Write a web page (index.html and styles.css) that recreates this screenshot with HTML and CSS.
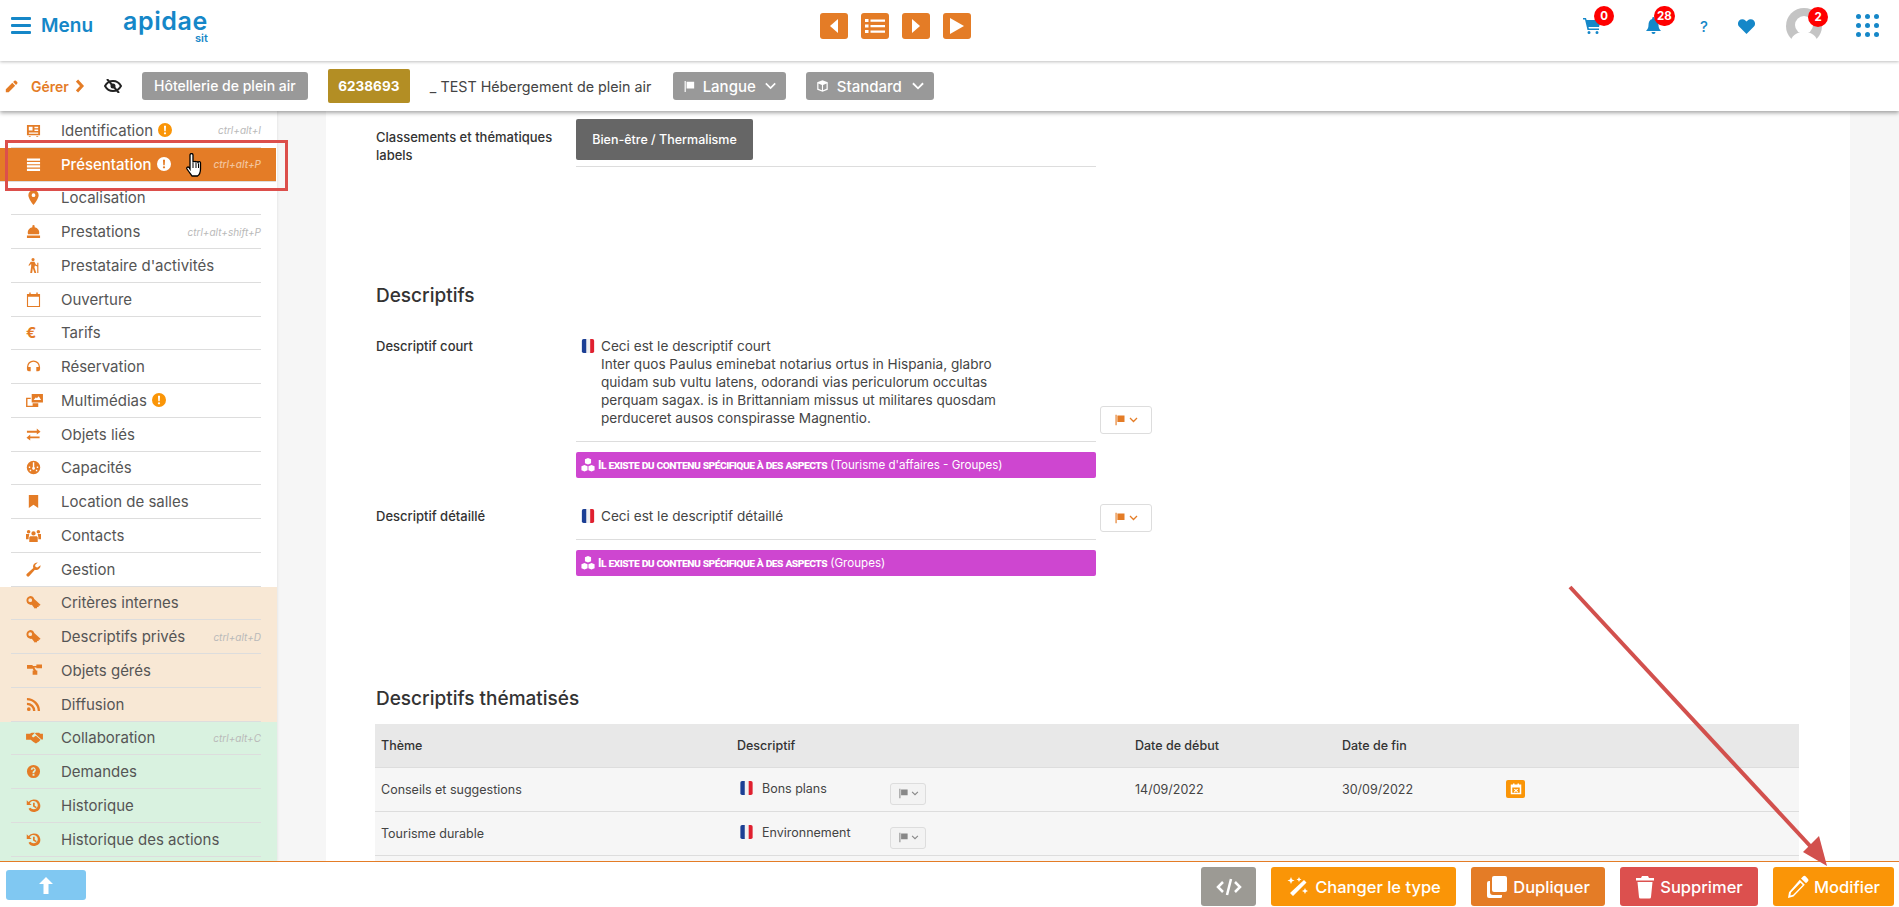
FILE: index.html
```html
<!DOCTYPE html>
<html lang="fr">
  <head>
    <meta charset="utf-8">
    <title>Apidae - Présentation</title>
    <link rel="stylesheet" href="styles.css">
  </head>
  <body>
    <svg class="icon-defs" width="0" height="0">
      <symbol id="i-card" viewBox="0 0 16 16"><path fill-rule="evenodd" d="M1 2h14v11H1zM3 4v4h4V4zm6 0v1.500h4V4zm0 3v1.500h4V7zM3 10v1.500h10V10zM3 14h2v1H3zm8 0h2v1h-2z"/></symbol>
      <symbol id="i-list" viewBox="0 0 16 16"><path d="M1 1.500h14v2.400H1zM1 5.200h14v2.400H1zM1 8.900h14v2.400H1zM1 12.600h14V15H1z"/></symbol>
      <symbol id="i-pin" viewBox="0 0 16 16"><path fill-rule="evenodd" d="M8 0a5.500 5.500 0 0 0-5.500 5.500C2.500 9.500 8 16 8 16s5.500-6.500 5.500-10.500A5.500 5.500 0 0 0 8 0zm0 7.500a2 2 0 1 1 0-4 2 2 0 0 1 0 4z"/></symbol>
      <symbol id="i-bell" viewBox="0 0 16 16"><path d="M8 1a1.200 1.200 0 0 1 1.200 1.200v1.200A5.800 5.800 0 0 1 13.800 11H2.200a5.800 5.800 0 0 1 4.600-7.600V2.200A1.200 1.200 0 0 1 8 1zM1 12.300h14V15H1z"/></symbol>
      <symbol id="i-hike" viewBox="0 0 16 16"><path d="M7.500 0a1.700 1.700 0 1 1 0 3.400 1.700 1.700 0 0 1 0-3.400zM5 4h4l1.500 3 1.500.8V5h1.200v11H12V9l-2.500-1L9 10l2 6H9L7.300 11 6.500 16H4.500l1-7V6L4 8H2.500z"/></symbol>
      <symbol id="i-cal" viewBox="0 0 16 16"><path fill-rule="evenodd" d="M1 2h2.500V.5H5V2h6V.5h1.500V2H15v14H1zm1.200 3v9.800h11.600V5z"/></symbol>
      <symbol id="i-head" viewBox="0 0 16 16"><path d="M8 1.500a7 7 0 0 1 7 7V11a2 2 0 0 1-2 2h-2V8.500h2.600a5.600 5.600 0 0 0-11.200 0H5V13H3a2 2 0 0 1-2-2V8.500a7 7 0 0 1 7-7z"/></symbol>
      <symbol id="i-media" viewBox="0 0 18 16"><path fill-rule="evenodd" d="M6 1h12v9H6zm2 6.500h8L13.500 3.500l-2 2-1-1zM0 5h5v1.500H1.500v7H7V11h6v4H0z"/></symbol>
      <symbol id="i-swap" viewBox="0 0 16 16"><path d="M1 4h10.500V1.500L15.500 5l-4 3V6H1zM14.500 10H4.500V8l-4 3.500 4 3V12h10z"/></symbol>
      <symbol id="i-gauge" viewBox="0 0 16 16"><path fill-rule="evenodd" d="M8 .8a7.200 7.200 0 1 1 0 14.400A7.200 7.200 0 0 1 8 .8zM7.300 2.500v5a1.500 1.500 0 1 0 1.500 0v-5zM3 7v1.500h1.500V7zm8.500 0v1.500H13V7zM4 10.500V12h1.500v-1.500zm6.500 0V12H12v-1.500z"/></symbol>
      <symbol id="i-mark" viewBox="0 0 16 16"><path d="M3 1h10v14l-5-3.500L3 15z"/></symbol>
      <symbol id="i-users" viewBox="0 0 16 16"><path d="M8 3.500a2.300 2.300 0 1 1 0 4.600 2.300 2.300 0 0 1 0-4.600zM2.800 2a1.900 1.900 0 1 1 0 3.800 1.900 1.900 0 0 1 0-3.800zm10.400 0a1.900 1.900 0 1 1 0 3.800 1.900 1.900 0 0 1 0-3.800zM4.500 8.800h7l1 1V15h-9V9.800zM0 6.500h3.500L2.800 10v2H0zm12.500 0H16V12h-2.800v-2z"/></symbol>
      <symbol id="i-wrench" viewBox="0 0 16 16"><path d="M15.500 3.500a4.500 4.500 0 0 1-6 4.700L3.500 15a1.700 1.700 0 0 1-2.500-2.500l6.800-6A4.500 4.500 0 0 1 12.500.5L9.700 3.300l.5 2 2 .5z"/></symbol>
      <symbol id="i-key" viewBox="0 0 16 16"><path fill-rule="evenodd" d="M4.500 1a4.500 4.500 0 0 1 4.300 3.200l6.700 6.300-1 1-1-.3v1.600h-1.600l-.2 1.500-1.200-.5-1 .9-3.300-4.200A4.500 4.500 0 1 1 4.500 1zm0 2.500a2 2 0 1 0 0 4 2 2 0 0 0 0-4z"/></symbol>
      <symbol id="i-tree" viewBox="0 0 16 16"><path d="M0 2h6v1.200h4V1.500h6v4h-6V4.700H7.800l2 3.300H11v4.500H6V8h1.300L5.500 5.500V6H0z"/></symbol>
      <symbol id="i-rss" viewBox="0 0 16 16"><path d="M1 1a14 14 0 0 1 14 14h-2.500A11.500 11.500 0 0 0 1 3.500zM1 6a9 9 0 0 1 9 9H7.500A6.500 6.500 0 0 0 1 8.500zM3 11a2 2 0 1 1 0 4 2 2 0 0 1 0-4z"/></symbol>
      <symbol id="i-hands" viewBox="0 0 18 16"><path d="M0 4h4l2-1h3.500L6 6.500 7.500 8l3-2 5 4.500-2 2-1 .5-2 1.500-3-2L5 10.500H0zM10.500 3H14l1 1h3v6h-1.500L10.800 5 9.500 3.500z"/></symbol>
      <symbol id="i-help" viewBox="0 0 16 16"><path fill-rule="evenodd" d="M8 1a7 7 0 1 1 0 14A7 7 0 0 1 8 1zM8 3.500A3 3 0 0 0 5 6h2a1 1 0 1 1 1.500.9C7.500 7.500 7 8.200 7 9.500h2c0-.8.300-1 1-1.500A3 3 0 0 0 8 3.500zM7 10.500v2h2v-2z"/></symbol>
      <symbol id="i-hist" viewBox="0 0 16 16"><path fill-rule="evenodd" d="M8.500 1.500a6.700 6.700 0 1 1-5.800 10l1.900-1a4.500 4.500 0 1 0-.6-4.800L6 7.500H.8V2.300l1.900 1.900a6.700 6.700 0 0 1 5.800-2.700zM7.500 5h1.800v3.200l2.200 1.500-1 1.300-3-2z"/></symbol>
      <symbol id="i-warn" viewBox="0 0 16 16"><path fill-rule="evenodd" d="M8 0a8 8 0 1 1 0 16A8 8 0 0 1 8 0zM6.800 3l.4 6.500h1.600L9.200 3zM8 10.500a1.300 1.300 0 1 0 0 2.600 1.300 1.300 0 0 0 0-2.600z"/></symbol>
      <symbol id="i-flag" viewBox="0 0 16 16"><path d="M2 1h1.500v14H2zM4.500 2H14v8.500H4.500z"/></symbol>
      <symbol id="i-fr" viewBox="0 0 14 16"><rect width="14" height="16" rx="2" fill="#f1f1f1"/><path d="M0 2a2 2 0 0 1 2-2h3v16H2a2 2 0 0 1-2-2z" fill="#1c3f94"/><path d="M9.500 0H12a2 2 0 0 1 2 2v12a2 2 0 0 1-2 2H9.500z" fill="#e0202f"/></symbol>
      <symbol id="i-cubes" viewBox="0 0 16 16"><path d="M8 0l3.500 1.500V6L8 7.500 4.500 6V1.500zM4 8l3.500 1.500V14L4 15.500.5 14V9.500zM12 8l3.500 1.500V14L12 15.500 8.500 14V9.500z"/></symbol>
      <symbol id="i-pencil" viewBox="0 0 16 16"><path d="M11.500 1a1.500 1.500 0 0 1 2 0l1.500 1.500a1.500 1.500 0 0 1 0 2L13.500 6 10 2.500zM9 3.500L12.500 7l-8 8H1v-3.500z"/></symbol>
    </svg>

    <header class="top-bar">
      <div class="top-left">
        <a class="menu-link">
          <span class="burger"><i></i><i></i><i></i></span>
          Menu
        </a>
        <div class="logo">
          <span class="logo-name">apidae</span>
          <span class="logo-sit">sit</span>
        </div>
      </div>
      <nav class="record-nav">
        <button class="nav-button"><svg width="10" height="14" viewBox="0 0 10 14"><path d="M9 0v14L1 7z" fill="#fff"/></svg></button>
        <button class="nav-button"><svg width="20" height="16" viewBox="0 0 20 16" fill="#fff"><path d="M0 1h3.500v3H0zM5.500 1.500H20v2.200H5.500zM0 6.500h3.500v3H0zM5.500 7H20v2.200H5.500zM0 12h3.500v3H0zM5.500 12.500H20v2.200H5.500z"/></svg></button>
        <button class="nav-button"><svg width="10" height="14" viewBox="0 0 10 14"><path d="M1 0v14l8-7z" fill="#fff"/></svg></button>
        <button class="nav-button"><svg width="16" height="18" viewBox="0 0 16 18"><path d="M1 1v16l14-8z" fill="#fff"/></svg></button>
      </nav>
      <div class="top-right">
        <span class="top-icon cart">
          <svg width="18" height="16" viewBox="0 0 18 16" fill="#1587c8"><path d="M0 0h3l.6 2H18l-2 7H5.500l.4 1.500H16V12H4.500L2 1.500H0zM6 13a1.500 1.500 0 1 1 0 3 1.500 1.500 0 0 1 0-3zm8 0a1.500 1.500 0 1 1 0 3 1.500 1.500 0 0 1 0-3z"/></svg>
          <b class="count">0</b>
        </span>
        <span class="top-icon bell">
          <svg width="15" height="18" viewBox="0 0 15 18" fill="#1587c8"><path d="M7.500 0a1.300 1.300 0 0 1 1.300 1.300v.6C11.500 2.500 12.500 5 12.500 8c0 3 1 4.500 2.500 6H0c1.500-1.500 2.500-3 2.500-6 0-3 1-5.500 3.700-6.100v-.6A1.300 1.300 0 0 1 7.500 0zM5.500 15h4a2 2 0 0 1-4 0z"/></svg>
          <b class="count">28</b>
        </span>
        <span class="top-icon help-mark">?</span>
        <span class="top-icon heart">
          <svg width="17" height="15" viewBox="0 0 17 15" fill="#1587c8"><path d="M8.500 15L1.300 7.800A4.300 4.300 0 0 1 7.400 1.500l1.100 1 1.100-1a4.300 4.300 0 0 1 6.100 6.300z"/></svg>
        </span>
        <span class="top-icon avatar">
          <svg width="36" height="36" viewBox="0 0 36 36"><circle cx="18" cy="18" r="18" fill="#c4c4c4"/><circle cx="18" cy="17" r="9" fill="#fff"/><path d="M4 36c1-9 7-12 14-12s13 3 14 12z" fill="#fff"/></svg>
          <b class="count">2</b>
        </span>
        <span class="apps-grid">
          <i></i><i></i><i></i><i></i><i></i><i></i><i></i><i></i><i></i>
        </span>
      </div>
    </header>

    <div class="tool-bar">
      <svg class="manage-pencil" width="13" height="13"><use href="#i-pencil"/></svg>
      <span class="manage-label">Gérer</span>
      <svg width="9" height="14" viewBox="0 0 9 14"><path d="M1 1.500l5 5.500-5 5.500" fill="none" stroke="#e47c26" stroke-width="3"/></svg>
      <svg class="eye-off" width="18" height="14" viewBox="0 0 18 14"><path d="M1 7c2-3.500 5-5 8-5s6 1.500 8 5c-2 3.500-5 5-8 5s-6-1.500-8-5z" fill="none" stroke="#222" stroke-width="2"/><circle cx="9" cy="7" r="2.500" fill="#222"/><path d="M3 0l12 14" stroke="#222" stroke-width="2"/></svg>
      <span class="type-badge">Hôtellerie de plein air</span>
      <span class="id-badge">6238693</span>
      <span class="record-name">_ TEST Hébergement de plein air</span>
      <button class="tool-select lang">
        <svg width="15" height="13" fill="#fff"><use href="#i-flag"/></svg>
        Langue
        <svg class="chev" width="13" height="8" viewBox="0 0 13 8"><path d="M1 1l5.500 5.500L12 1" fill="none" stroke="#fff" stroke-width="2"/></svg>
      </button>
      <button class="tool-select standard">
        <svg width="14" height="14" viewBox="0 0 16 16"><path d="M8 1l6.500 2.500v9L8 15l-6.500-2.500v-9zM3 5v6.500l4.300 1.700V6.800zm10 0L8.700 6.800v6.400l4.300-1.700z" fill="#fff" fill-rule="evenodd"/></svg>
        Standard
        <svg class="chev" width="13" height="8" viewBox="0 0 13 8"><path d="M1 1l5.500 5.500L12 1" fill="none" stroke="#fff" stroke-width="2"/></svg>
      </button>
    </div>

    <main class="main">
      <aside class="sidebar">
        <ul class="side-group">
          <li class="side-item"><svg class="side-icon"><use href="#i-card"/></svg><span>Identification</span><svg class="side-warn"><use href="#i-warn"/></svg><em>ctrl+alt+I</em></li>
          <li class="side-item active"><svg class="side-icon"><use href="#i-list"/></svg><span>Présentation</span><svg class="side-warn"><use href="#i-warn"/></svg><em>ctrl+alt+P</em></li>
          <li class="side-item"><svg class="side-icon"><use href="#i-pin"/></svg><span>Localisation</span></li>
          <li class="side-item"><svg class="side-icon"><use href="#i-bell"/></svg><span>Prestations</span><em>ctrl+alt+shift+P</em></li>
          <li class="side-item"><svg class="side-icon"><use href="#i-hike"/></svg><span>Prestataire d'activités</span></li>
          <li class="side-item"><svg class="side-icon"><use href="#i-cal"/></svg><span>Ouverture</span></li>
          <li class="side-item"><b class="side-icon euro">€</b><span>Tarifs</span></li>
          <li class="side-item"><svg class="side-icon"><use href="#i-head"/></svg><span>Réservation</span></li>
          <li class="side-item"><svg class="side-icon wide"><use href="#i-media"/></svg><span>Multimédias</span><svg class="side-warn"><use href="#i-warn"/></svg></li>
          <li class="side-item"><svg class="side-icon"><use href="#i-swap"/></svg><span>Objets liés</span></li>
          <li class="side-item"><svg class="side-icon"><use href="#i-gauge"/></svg><span>Capacités</span></li>
          <li class="side-item"><svg class="side-icon"><use href="#i-mark"/></svg><span>Location de salles</span></li>
          <li class="side-item"><svg class="side-icon"><use href="#i-users"/></svg><span>Contacts</span></li>
          <li class="side-item"><svg class="side-icon"><use href="#i-wrench"/></svg><span>Gestion</span></li>
        </ul>
        <ul class="side-group internal">
          <li class="side-item"><svg class="side-icon"><use href="#i-key"/></svg><span>Critères internes</span></li>
          <li class="side-item"><svg class="side-icon"><use href="#i-key"/></svg><span>Descriptifs privés</span><em>ctrl+alt+D</em></li>
          <li class="side-item"><svg class="side-icon wide"><use href="#i-tree"/></svg><span>Objets gérés</span></li>
          <li class="side-item"><svg class="side-icon"><use href="#i-rss"/></svg><span>Diffusion</span></li>
        </ul>
        <ul class="side-group shared">
          <li class="side-item"><svg class="side-icon wide"><use href="#i-hands"/></svg><span>Collaboration</span><em>ctrl+alt+C</em></li>
          <li class="side-item"><svg class="side-icon"><use href="#i-help"/></svg><span>Demandes</span></li>
          <li class="side-item"><svg class="side-icon"><use href="#i-hist"/></svg><span>Historique</span></li>
          <li class="side-item"><svg class="side-icon"><use href="#i-hist"/></svg><span>Historique des actions</span></li>
        </ul>
      </aside>

      <section class="content">
        <div class="panel">
          <div class="field first-field">
            <div class="field-label">Classements et thématiques labels</div>
            <div class="field-value tag-value">
              <span class="dark-tag">Bien-être / Thermalisme</span>
            </div>
          </div>

          <h2 class="section-title descriptifs">Descriptifs</h2>

          <div class="field">
            <div class="field-label">Descriptif court</div>
            <div class="field-value">
              <div class="text-row">
                <svg class="flag-fr"><use href="#i-fr"/></svg>
                <p>Ceci est le descriptif court<br>
                Inter quos Paulus eminebat notarius ortus in Hispania, glabro quidam sub vultu latens, odorandi vias periculorum occultas perquam sagax. is in Brittanniam missus ut militares quosdam perduceret ausos conspirasse Magnentio.</p>
              </div>
              <button class="lang-button"><svg width="12" height="12"><use href="#i-flag"/></svg><svg width="9" height="6" viewBox="0 0 9 6"><path d="M1 1l3.500 3.500L8 1" fill="none" stroke="currentColor" stroke-width="1.300"/></svg></button>
            </div>
          </div>
          <div class="aspect-bar"><svg width="14" height="14"><use href="#i-cubes"/></svg><span class="aspect-caps">Il existe du contenu spécifique à des aspects</span> (Tourisme d'affaires - Groupes)</div>

          <div class="field second-field">
            <div class="field-label">Descriptif détaillé</div>
            <div class="field-value">
              <div class="text-row">
                <svg class="flag-fr"><use href="#i-fr"/></svg>
                <p>Ceci est le descriptif détaillé</p>
              </div>
              <button class="lang-button"><svg width="12" height="12"><use href="#i-flag"/></svg><svg width="9" height="6" viewBox="0 0 9 6"><path d="M1 1l3.500 3.500L8 1" fill="none" stroke="currentColor" stroke-width="1.300"/></svg></button>
            </div>
          </div>
          <div class="aspect-bar"><svg width="14" height="14"><use href="#i-cubes"/></svg><span class="aspect-caps">Il existe du contenu spécifique à des aspects</span> (Groupes)</div>

          <h2 class="section-title themed">Descriptifs thématisés</h2>

          <table class="theme-table">
            <colgroup>
              <col class="col-theme"><col class="col-desc"><col class="col-start"><col class="col-end"><col>
            </colgroup>
            <thead>
              <tr><th>Thème</th><th>Descriptif</th><th>Date de début</th><th>Date de fin</th><th></th></tr>
            </thead>
            <tbody>
              <tr>
                <td>Conseils et suggestions</td>
                <td>
                  <div class="desc-cell">
                    <svg class="flag-fr small"><use href="#i-fr"/></svg>
                    <span class="desc-name">Bons plans</span>
                    <button class="mini-lang"><svg width="11" height="11"><use href="#i-flag"/></svg><svg width="8" height="5" viewBox="0 0 9 6"><path d="M1 1l3.500 3.500L8 1" fill="none" stroke="currentColor" stroke-width="1.300"/></svg></button>
                  </div>
                </td>
                <td>14/09/2022</td>
                <td>30/09/2022</td>
                <td>
                  <span class="cal-off"><svg width="12" height="12" viewBox="0 0 16 16"><path fill-rule="evenodd" d="M1 2h3V.5h2V2h4V.5h2V2h3v13H1zm2 4v7h10V6zm3 1.500l2 1.500 2-1.500.8 1L9 10l1.800 1.500-.8 1L8 11l-2 1.500-.8-1L7 10 5.200 8.500z" fill="#fff"/></svg></span>
                </td>
              </tr>
              <tr>
                <td>Tourisme durable</td>
                <td>
                  <div class="desc-cell">
                    <svg class="flag-fr small"><use href="#i-fr"/></svg>
                    <span class="desc-name">Environnement</span>
                    <button class="mini-lang"><svg width="11" height="11"><use href="#i-flag"/></svg><svg width="8" height="5" viewBox="0 0 9 6"><path d="M1 1l3.500 3.500L8 1" fill="none" stroke="currentColor" stroke-width="1.300"/></svg></button>
                  </div>
                </td>
                <td></td>
                <td></td>
                <td></td>
              </tr>
              <tr><td></td><td></td><td></td><td></td><td></td></tr>
            </tbody>
          </table>
        </div>
      </section>
    </main>

    <footer class="action-bar">
      <button class="up-button"><svg width="14" height="17" viewBox="0 0 14 17"><path d="M7 0l7 7H9.500v10h-5V7H0z" fill="#fff"/></svg></button>
      <div class="actions">
        <button class="action code"><svg width="26" height="18" viewBox="0 0 26 18" fill="none" stroke="#fff" stroke-width="2.500"><path d="M7 4L2 9l5 5M19 4l5 5-5 5M15 1l-4 16"/></svg></button>
        <button class="action amber"><svg width="24" height="24" viewBox="0 0 24 24" fill="#fff"><path d="M18 5l2.500 2.500L7 21l-3-3zM5 2l1 2.500L8.500 5.500 6 6.500 5 9 4 6.500 1.500 5.500 4 4.500zM13 2l.8 1.700L15.500 4.500l-1.700.8L13 7l-.8-1.700-1.700-.8 1.700-.8zM19 13l.9 2.100 2.100.9-2.100.9L19 19l-.9-2.100-2.100-.9 2.100-.9z"/></svg>Changer le type</button>
        <button class="action orange"><svg width="22" height="24" viewBox="0 0 22 24" fill="#fff"><path d="M8 1h11a2 2 0 0 1 2 2v12a2 2 0 0 1-2 2H8a2 2 0 0 1-2-2V3a2 2 0 0 1 2-2z"/><path d="M4 6v11a3 3 0 0 0 3 3h9v1.500a1.500 1.500 0 0 1-1.500 1.500H3a2 2 0 0 1-2-2V8a2 2 0 0 1 2-2z"/></svg>Dupliquer</button>
        <button class="action red"><svg width="20" height="24" viewBox="0 0 20 24" fill="#fff"><path d="M7 1h6l1 2h5v2.500H1V3h5zM2.500 7h15L16 22a1.500 1.500 0 0 1-1.500 1.500h-9A1.500 1.500 0 0 1 4 22z"/></svg>Supprimer</button>
        <button class="action amber"><svg width="22" height="24" viewBox="0 0 22 24" fill="#fff"><path d="M16 1.500a2 2 0 0 1 2.800 0l2 2.200a2 2 0 0 1 0 2.800L19 8.300 14 3.400zM12.800 4.700l5 5L6.500 21.500 1 23l1-5.800zM4 17.500l-.6 3 2.800-.8 9.500-9.800-2.200-2.200z" fill-rule="evenodd"/></svg>Modifier</button>
      </div>
    </footer>

    <!-- annotations drawn over the capture -->
    <div class="note-box"></div>
    <svg class="note-hand" width="18" height="24" viewBox="0 0 18 24"><path d="M5 2a1.500 1.500 0 0 1 3 0v7l1-.3a1.300 1.300 0 0 1 2 .3 1.300 1.300 0 0 1 2 .4 1.300 1.300 0 0 1 2.500.6V16c0 3-1.500 6-3 7H7c-1-1.500-3-4-5-7-.8-1.300.8-2.700 2-1.500L5 16z" fill="#fff" stroke="#000" stroke-width="1.300"/><path d="M8 10v5M11 10v5M13.500 10.500V15" stroke="#000"/></svg>
    <svg class="note-arrow" width="1899" height="907" viewBox="0 0 1899 907">
      <path d="M1570 587L1812 848" stroke="#d2504d" stroke-width="4"/>
      <path d="M1827 866L1803 852 1819 836z" fill="#d2504d"/>
    </svg>
  </body>
</html>
```

FILE: styles.css
```css
* {
  box-sizing: border-box;
}

html, body {
  height: 100%;
}

body {
  margin: 0;
  display: flex;
  flex-direction: column;
  overflow: hidden;
  background: white;
  color: #444;
  font-family: Inter, "Open Sans", sans-serif;
  font-size: 13px;
}

button {
  font-family: inherit;
  border: none;
  padding: 0;
  cursor: pointer;
}

.icon-defs {
  position: absolute;
}

/* top bar */
.top-bar {
  height: 61px;
  flex: none;
  display: grid;
  grid-template-columns: 820px auto 1fr;
  background: white;
  box-shadow: 0 1px 3px rgba(0, 0, 0, 0.25);
  position: relative;
  z-index: 3;
}

.top-left {
  display: flex;
  align-items: flex-start;
}

.menu-link {
  display: flex;
  align-items: center;
  gap: 10px;
  margin: 14px 0 0 11px;
  color: #1587c8;
  font-size: 19px;
  font-weight: 600;
}

.burger {
  display: flex;
  flex-direction: column;
  gap: 4px;
  width: 20px;
}

.burger i {
  height: 3px;
  background: #1587c8;
  border-radius: 1px;
}

.logo {
  margin: 8px 0 0 30px;
  display: flex;
  flex-direction: column;
  align-items: flex-end;
  color: #1587c8;
}

.logo-name {
  font-size: 25px;
  font-weight: 600;
  line-height: 26px;
  letter-spacing: 0.6px;
}

.logo-sit {
  font-size: 11px;
  font-weight: 600;
  line-height: 9px;
}

.record-nav {
  display: flex;
  gap: 13px;
  padding-top: 13px;
}

.nav-button {
  width: 28px;
  height: 26px;
  display: flex;
  align-items: center;
  justify-content: center;
  background: #e47c26;
  border-radius: 3px;
}

.top-right {
  position: relative;
  display: flex;
  justify-content: flex-end;
  align-items: flex-start;
}

.top-icon {
  position: relative;
  display: block;
  color: #1587c8;
}

.cart {
  margin-top: 18px;
}

.bell {
  margin: 17px 0 0 45px;
}

.help-mark {
  margin: 17px 0 0 39px;
  font-size: 15px;
  font-weight: 500;
}

.heart {
  margin: 19px 0 0 30px;
}

.avatar {
  margin: 8px 0 0 31px;
  height: 36px;
}

.count {
  position: absolute;
  min-width: 20px;
  height: 20px;
  padding: 0 3px;
  border-radius: 10px;
  background: #f00;
  color: white;
  font-size: 11.5px;
  line-height: 20px;
  text-align: center;
}

.cart .count {
  top: -12px;
  left: 11px;
}

.bell .count {
  top: -11px;
  left: 8px;
}

.avatar .count {
  top: -1px;
  left: 22px;
}

.apps-grid {
  display: grid;
  grid-template-columns: repeat(3, 5px);
  gap: 4px;
  margin: 14px 20px 0 34px;
}

.apps-grid i {
  height: 5px;
  border-radius: 50%;
  background: #1587c8;
}

/* second bar */
.tool-bar {
  height: 50px;
  flex: none;
  display: flex;
  align-items: center;
  padding-left: 5px;
  background: white;
  box-shadow: 0 2px 4px rgba(0, 0, 0, 0.35);
  position: relative;
  z-index: 2;
}

.manage-pencil {
  fill: #e47c26;
}

.manage-label {
  margin: 0 7px 0 13px;
  color: #e47c26;
  font-size: 14px;
  font-weight: 600;
}

.eye-off {
  margin: 0 20px 0 19px;
}

.type-badge {
  width: 166px;
  height: 28px;
  line-height: 28px;
  text-align: center;
  background: #999;
  color: white;
  border-radius: 3px;
  font-size: 14px;
  font-weight: 500;
}

.id-badge {
  width: 82px;
  height: 34px;
  line-height: 34px;
  margin: 0 20px;
  text-align: center;
  background: #b38e24;
  color: white;
  border-radius: 2px;
  font-size: 13.5px;
  font-weight: 700;
}

.record-name {
  width: 243px;
  font-size: 14.3px;
  color: #444;
  white-space: nowrap;
}

.tool-select {
  height: 28px;
  display: flex;
  align-items: center;
  gap: 6px;
  padding: 0 10px;
  margin-right: 20px;
  background: #999;
  color: white;
  border-radius: 3px;
  font-size: 15px;
  font-weight: 500;
}

.tool-select.lang {
  width: 113px;
  gap: 7px;
}

.tool-select.standard {
  width: 128px;
  gap: 8px;
}

.tool-select .chev {
  margin-left: 2px;
}

/* page body */
.main {
  flex: 1;
  min-height: 0;
  display: flex;
}

.sidebar {
  width: 277px;
  flex: none;
  padding-top: 3px;
  background: white;
  box-shadow: 1px 0 2px rgba(0, 0, 0, 0.06);
  position: relative;
  overflow: hidden;
}

.side-group {
  list-style: none;
  margin: 0;
  padding: 0;
}

.side-group.internal {
  background: #f8e8d5;
}

.side-group.shared {
  background: #d9f2e0;
  height: 160px;
}

.side-item {
  height: 33.75px;
  margin: 0 16px 0 11px;
  display: flex;
  align-items: center;
  border-bottom: 1px solid #ddd;
  color: #555;
  font-size: 15px;
  white-space: nowrap;
}

.side-item.active {
  margin: 0 1px 0 0;
  padding: 0 15px 0 11px;
  background: #e47c26;
  color: white;
  font-weight: 500;
}

.side-icon {
  width: 15px;
  height: 15px;
  margin: 0 20px 0 15px;
  flex: none;
  fill: #e47c26;
  color: #e47c26;
}

.side-icon.wide {
  width: 17px;
  margin-right: 18px;
}

.active .side-icon {
  fill: white;
}

.euro {
  font-size: 15px;
  line-height: 15px;
}

.side-warn {
  width: 14px;
  height: 14px;
  margin-left: 5px;
  fill: #fa9507;
}

.active .side-warn {
  fill: white;
}

.side-item em {
  margin-left: auto;
  color: #b9b9b9;
  font-size: 10px;
}

.active em {
  color: #f3c49c;
}

.content {
  flex: 1;
  min-width: 0;
  padding: 0 49px;
  background: #f6f6f6;
}

.panel {
  height: 100%;
  overflow: hidden;
  padding: 0 50px;
  background: white;
}

.field {
  display: flex;
}

.first-field {
  padding-top: 8px;
}

.field-label {
  width: 200px;
  flex: none;
  padding-right: 20px;
  color: #333;
  font-size: 13px;
  font-weight: 500;
  line-height: 18px;
}

.first-field .field-label {
  padding-top: 9px;
}

.field-value {
  position: relative;
  width: 520px;
  border-bottom: 1px solid #ddd;
}

.tag-value {
  height: 48px;
}

.dark-tag {
  display: block;
  width: 177px;
  height: 41px;
  line-height: 41px;
  text-align: center;
  background: #666;
  color: white;
  border-radius: 2px;
  font-size: 12.5px;
  font-weight: 500;
}

.section-title {
  margin: 0;
  color: #333;
  font-size: 19px;
  font-weight: 500;
  line-height: 24px;
}

.descriptifs {
  margin: 117px 0 29px;
}

.text-row {
  display: flex;
  padding: 0 0 14px 5px;
}

.text-row p {
  margin: 0;
  width: 420px;
  color: #444;
  font-size: 13.6px;
  line-height: 18px;
}

.flag-fr {
  width: 14px;
  height: 14px;
  margin: 2px 6px 0 0;
  flex: none;
}

.lang-button {
  position: absolute;
  right: -56px;
  bottom: 7px;
  width: 52px;
  height: 28px;
  display: flex;
  align-items: center;
  justify-content: center;
  gap: 3px;
  background: white;
  border: 1px solid #ddd;
  border-radius: 3px;
  color: #e47c26;
  fill: #e47c26;
}

.aspect-bar {
  display: flex;
  align-items: center;
  gap: 3px;
  width: 520px;
  height: 26px;
  margin: 10px 0 0 200px;
  padding-left: 5px;
  background: #ce46d0;
  color: white;
  border-radius: 2px;
  font-size: 11.6px;
  fill: white;
  white-space: nowrap;
}

.aspect-caps {
  font-family: Roboto, sans-serif;
  font-variant: small-caps;
  font-weight: 700;
  font-size: 12px;
  letter-spacing: -0.55px;
}

.second-field {
  margin-top: 29px;
}

.themed {
  margin: 111px 0 13px;
}

.theme-table {
  width: 1424px;
  margin-left: -1px;
  border-collapse: collapse;
  table-layout: fixed;
}

.col-theme {
  width: 356px;
}

.col-desc {
  width: 398px;
}

.col-start {
  width: 207px;
}

.col-end {
  width: 164px;
}

.theme-table th {
  height: 43px;
  padding: 0 6px;
  background: #e8e8e8;
  color: #333;
  font-size: 12.5px;
  font-weight: 500;
  text-align: left;
  border-bottom: 1px solid #ddd;
}

.theme-table td {
  height: 44px;
  padding: 0 6px;
  background: #f6f6f6;
  color: #444;
  font-size: 12.5px;
  border-bottom: 1px solid #ddd;
}

.desc-cell {
  display: flex;
  align-items: center;
  padding-top: 4px;
}

.flag-fr.small {
  width: 13px;
  height: 14px;
  margin: 0 9px 6px 3px;
}

.desc-name {
  width: 128px;
  margin-bottom: 6px;
}

.mini-lang {
  width: 36px;
  height: 22px;
  display: flex;
  align-items: center;
  justify-content: center;
  gap: 2px;
  margin-top: 5px;
  background: #f3f3f3;
  border: 1px solid #ddd;
  border-radius: 3px;
  color: #888;
  fill: #888;
}

.cal-off {
  display: flex;
  align-items: center;
  justify-content: center;
  width: 19px;
  height: 18px;
  background: #fa9507;
  border-radius: 2px;
}

/* bottom bar */
.action-bar {
  height: 46px;
  flex: none;
  display: flex;
  justify-content: space-between;
  border-top: 1px solid #e47c26;
  background: white;
  position: relative;
  z-index: 2;
}

.up-button {
  width: 80px;
  height: 30px;
  margin: 8px 0 0 6px;
  display: flex;
  align-items: center;
  justify-content: center;
  background: #80c8f2;
  border-radius: 3px;
}

.actions {
  display: flex;
  gap: 15px;
  padding: 5px 5px 0 0;
}

.action {
  height: 39px;
  display: flex;
  align-items: center;
  justify-content: center;
  gap: 5px;
  color: white;
  border-radius: 3px;
  font-size: 16.5px;
  font-weight: 500;
}

.action.code {
  width: 55px;
  background: #9c9a94;
}

.action.amber {
  background: #fa9507;
}

.action.amber:nth-child(2) {
  width: 185px;
}

.action.amber:nth-child(5) {
  width: 121px;
}

.action.orange {
  width: 134px;
  background: #e47c26;
}

.action.red {
  width: 138px;
  background: #dc504e;
}

/* annotations */
.note-box {
  position: absolute;
  left: 5px;
  top: 140px;
  width: 283px;
  height: 51px;
  border: 3px solid #dc4f4b;
  z-index: 4;
}

.note-hand {
  position: absolute;
  left: 185px;
  top: 153px;
  z-index: 4;
}

.note-arrow {
  position: absolute;
  left: 0;
  top: 0;
  z-index: 4;
  pointer-events: none;
}
```
